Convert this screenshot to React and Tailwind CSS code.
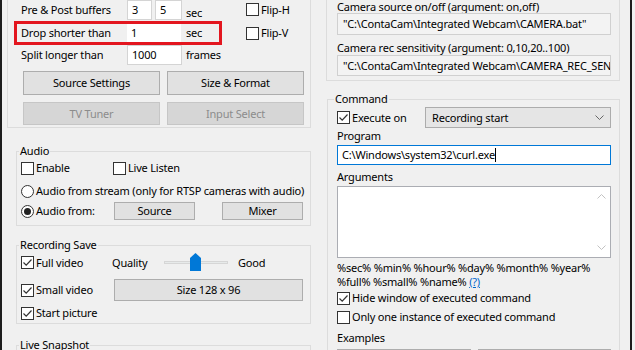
import React from "react";

const Check = ({ checked }) => (
  <span className="w-[13px] h-[13px] border border-[#333] bg-white flex items-center justify-center shrink-0">
    {checked && (
      <svg width="11" height="11" viewBox="0 0 11 11">
        <path d="M1.5 5.5 L4.2 8.2 L9.5 2.5" fill="none" stroke="#333" strokeWidth="1.2" />
      </svg>
    )}
  </span>
);

const Radio = ({ checked }) => (
  <span className="w-[13px] h-[13px] rounded-full border border-[#333] bg-white flex items-center justify-center shrink-0">
    {checked && <span className="w-[7px] h-[7px] rounded-full bg-[#222]" />}
  </span>
);

const Btn = ({ children, className = "", disabled }) => (
  <div
    className={`${
      disabled ? "bg-[#d6d6d6] border-[#c6c6c6] text-[#8c8c8c]" : "bg-[#e1e1e1] border-[#adadad]"
    } border flex items-center justify-center shrink-0 ${className}`}
  >
    {children}
  </div>
);

const Field = ({ children, className = "" }) => (
  <div className={`bg-white border border-[#d4d4d4] flex items-center px-[4px] shrink-0 ${className}`}>
    {children}
  </div>
);

const Group = ({ title, className = "", legendClass = "ml-[2px]", children }) => (
  <fieldset className={`border border-[#dcdcdc] ${className}`}>
    <legend className={`px-[1px] leading-[16px] ${legendClass}`}>{title}</legend>
    {children}
  </fieldset>
);

const App = () => {
  return (
    <div className="w-[635px] h-[350px] bg-[#f0f0f0] overflow-hidden font-['Noto_Sans',sans-serif] text-[11px] tracking-[-0.2px] text-black leading-[16px]">
      <div className="w-[632px] h-full border-l-2 border-r-2 border-[#1c1c1c] flex">
        {/* left column */}
        <div className="w-[316px] shrink-0 flex flex-col">
          <div className="ml-[5px] w-[304px] h-[128px] shrink-0 border-x border-b border-[#dcdcdc] flex flex-col">
            <div className="h-[20px] flex pl-[13px]">
              <div className="w-[225px] flex">
                <span className="w-[106px] pt-[2px]">Pre &amp; Post buffers</span>
                <Field className="w-[25px] h-[20px]">3</Field>
                <Field className="w-[27px] h-[20px] ml-[3px]">5</Field>
                <span className="ml-[4px] pt-[5px]">sec</span>
              </div>
              <div className="flex items-center gap-[2px] h-[19px]">
                <Check />
                <span>Flip-H</span>
              </div>
            </div>
            <div className="h-[24px] mt-[1px] flex">
              <div className="ml-[6px] w-[208px] h-[24px] border-[3px] border-[#e3161f] flex items-center pl-[4px]">
                <span className="w-[106px]">Drop shorter than</span>
                <div className="w-[54px] h-[18px] bg-white flex items-center px-[4px]">1</div>
                <span className="ml-[5px]">sec</span>
              </div>
              <div className="ml-[24px] flex items-center gap-[2px]">
                <Check />
                <span>Flip-V</span>
              </div>
            </div>
            <div className="h-[20px] flex items-center pl-[13px]">
              <span className="w-[106px]">Split longer than</span>
              <Field className="w-[55px] h-[20px]">1000</Field>
              <span className="ml-[4px]">frames</span>
            </div>
            <div className="mt-[6px] ml-[15px] flex gap-[7px]">
              <Btn className="w-[137px] h-[24px]">Source Settings</Btn>
              <Btn className="w-[137px] h-[24px]">Size &amp; Format</Btn>
            </div>
            <div className="mt-[7px] ml-[15px] flex gap-[7px]">
              <Btn disabled className="w-[137px] h-[23px]">TV Tuner</Btn>
              <Btn disabled className="w-[137px] h-[23px]">Input Select</Btn>
            </div>
          </div>

          <Group title="Audio" className="mt-[15px] ml-[14px] w-[295px] h-[83px] shrink-0">
            <div className="pl-[4px] flex flex-col">
              <div className="h-[18px] flex items-center">
                <div className="w-[92px] flex items-center gap-[2px]">
                  <Check />
                  <span>Enable</span>
                </div>
                <div className="flex items-center gap-[2px]">
                  <Check />
                  <span>Live Listen</span>
                </div>
              </div>
              <div className="h-[18px] mt-[5px] flex items-center gap-[2px] whitespace-nowrap">
                <Radio />
                <span>Audio from stream (only for RTSP cameras with audio)</span>
              </div>
              <div className="h-[18px] mt-[2px] flex items-center">
                <div className="w-[93px] flex items-center gap-[2px]">
                  <Radio checked />
                  <span>Audio from:</span>
                </div>
                <Btn className="w-[81px] h-[18px]">Source</Btn>
                <Btn className="w-[81px] h-[18px] ml-[27px]">Mixer</Btn>
              </div>
            </div>
          </Group>

          <Group title="Recording Save" className="mt-[11px] ml-[14px] w-[295px] h-[87px] shrink-0">
            <div className="pl-[4px] flex flex-col">
              <div className="h-[19px] flex items-center">
                <div className="w-[91px] flex items-center gap-[2px]">
                  <Check checked />
                  <span>Full video</span>
                </div>
                <span className="w-[52px]">Quality</span>
                <div className="w-[64px] h-[19px] flex items-center relative">
                  <div className="w-full h-[3px] bg-[#e7eaea] border border-[#d6d6d6]" />
                  <svg width="11" height="18" viewBox="0 0 11 18" className="absolute left-[26px] top-0">
                    <polygon points="0,5 5.5,0 11,5 11,18 0,18" fill="#0078d7" />
                  </svg>
                </div>
                <span className="ml-[10px]">Good</span>
              </div>
              <div className="h-[22px] mt-[7px] flex items-center">
                <div className="w-[93px] flex items-center gap-[2px]">
                  <Check checked />
                  <span>Small video</span>
                </div>
                <Btn className="w-[189px] h-[22px]">Size 128 x 96</Btn>
              </div>
              <div className="h-[18px] mt-[3px] flex items-center gap-[2px]">
                <Check checked />
                <span>Start picture</span>
              </div>
            </div>
          </Group>

          <Group title="Live Snapshot" className="mt-[13px] ml-[14px] w-[295px] h-[40px] shrink-0" />
        </div>

        {/* right column */}
        <div className="flex-1 flex flex-col">
          <div className="ml-[8px] w-[294px] h-[81px] shrink-0 border-x border-b border-[#dcdcdc] flex flex-col pl-[10px]">
            <div className="h-[13px] leading-[14px]">Camera source on/off (argument: on,off)</div>
            <div className="w-[274px] h-[22px] bg-[#f3f3f3] border border-[#d0d0d0] flex items-center px-[5px] whitespace-nowrap overflow-hidden">
              {'"C:\\ContaCam\\Integrated Webcam\\CAMERA.bat"'}
            </div>
            <div className="h-[14px] mt-[6px] leading-[14px]">Camera rec sensitivity (argument: 0,10,20..100)</div>
            <div className="w-[274px] h-[21px] bg-[#f3f3f3] border border-[#d0d0d0] flex items-center px-[5px] whitespace-nowrap overflow-hidden">
              {'"C:\\ContaCam\\Integrated Webcam\\CAMERA_REC_SENSITIVITY.bat"'}
            </div>
          </div>

          <Group title="Command" legendClass="ml-[6px]" className="mt-[10px] ml-[9px] w-[293px] h-[280px] shrink-0">
            <div className="pl-[9px] flex flex-col">
              <div className="h-[21px] flex items-center">
                <div className="w-[88px] flex items-center gap-[2px]">
                  <Check checked />
                  <span>Execute on</span>
                </div>
                <div className="w-[186px] h-[21px] bg-[#e5e5e5] border border-[#acacac] flex items-center justify-between pl-[6px] pr-[6px]">
                  <span>Recording start</span>
                  <svg width="9" height="6" viewBox="0 0 9 6">
                    <path d="M0.5 0.5 L4.5 4.5 L8.5 0.5" fill="none" stroke="#666" strokeWidth="1" />
                  </svg>
                </div>
              </div>
              <div className="h-[16px]">Program</div>
              <div className="mt-[1px] w-[274px] h-[20px] bg-white border border-[#0078d7] flex items-center px-[4px]">
                <span>{"C:\\Windows\\system32\\curl.exe"}</span>
                <span className="w-[1px] h-[14px] bg-black" />
              </div>
              <div className="h-[16px] mt-[4px]">Arguments</div>
              <div className="mt-[1px] w-[274px] h-[72px] bg-white border border-[#abadb3] flex flex-col items-end justify-between pr-[4px] py-[6px]">
                <svg width="9" height="6" viewBox="0 0 9 6">
                  <path d="M0.5 5.5 L4.5 1.5 L8.5 5.5" fill="none" stroke="#c2c2c2" strokeWidth="1" />
                </svg>
                <svg width="9" height="6" viewBox="0 0 9 6">
                  <path d="M0.5 0.5 L4.5 4.5 L8.5 0.5" fill="none" stroke="#c2c2c2" strokeWidth="1" />
                </svg>
              </div>
              <div className="mt-[3px] leading-[14px] whitespace-nowrap">
                <div>%sec% %min% %hour% %day% %month% %year%</div>
                <div>
                  %full% %small% %name% <span className="text-[#0066cc] underline">(?)</span>
                </div>
              </div>
              <div className="h-[18px] flex items-center gap-[2px]">
                <Check checked />
                <span>Hide window of executed command</span>
              </div>
              <div className="h-[18px] mt-[1px] flex items-center gap-[2px]">
                <Check />
                <span>Only one instance of executed command</span>
              </div>
              <div className="h-[16px] mt-[4px]">Examples</div>
              <div className="mt-[3px] flex gap-[7px]">
                <Btn className="w-[134px] h-[22px]" />
                <Btn className="w-[133px] h-[22px]" />
              </div>
            </div>
          </Group>
        </div>
      </div>
    </div>
  );
};

export default App;
